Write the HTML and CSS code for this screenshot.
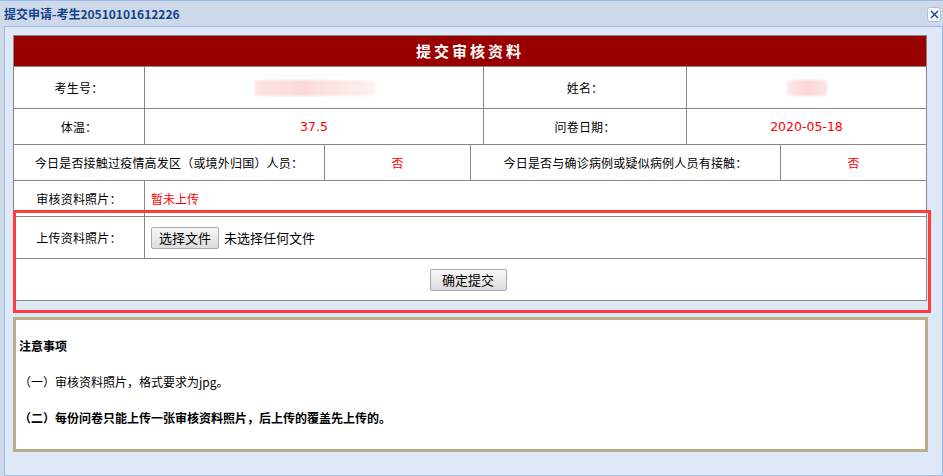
FILE: index.html
```html
<!DOCTYPE html>
<html lang="zh-CN">
  <head>
    <meta charset="utf-8">
    <title>提交申请</title>
    <link rel="stylesheet" href="styles.css">
  </head>

  <body>
    <div class="window">
      <div class="titlebar">
        <span class="title">提交申请-考生20510101612226</span>
        <button type="button" class="close" aria-label="关闭" title="关闭">
          <svg width="9" height="9" viewBox="0 0 9 9" fill="none" stroke="#15428b" stroke-width="1.4">
            <path d="M1 1 8 8M8 1 1 8" />
          </svg>
        </button>
      </div>

      <div class="panel">
        <!-- 제출 폼 -->
        <div class="form">
          <div class="head">提交审核资料</div>

          <div class="row tall">
            <div class="cell label c1">考生号：</div>
            <div class="cell c2"><span class="blur wide"></span></div>
            <div class="cell label c3">姓名：</div>
            <div class="cell c4"><span class="blur"></span></div>
          </div>

          <div class="row">
            <div class="cell label c1">体温：</div>
            <div class="cell c2 red num">37.5</div>
            <div class="cell label c3">问卷日期：</div>
            <div class="cell c4 red num">2020-05-18</div>
          </div>

          <div class="row">
            <div class="cell label d1">今日是否接触过疫情高发区（或境外归国）人员：</div>
            <div class="cell d2 red">否</div>
            <div class="cell label d3">今日是否与确诊病例或疑似病例人员有接触：</div>
            <div class="cell d4 red">否</div>
          </div>

          <div class="row">
            <div class="cell label c1">审核资料照片：</div>
            <div class="cell rest red left">暂未上传</div>
          </div>

          <div class="row tall">
            <div class="cell label c1">上传资料照片：</div>
            <div class="cell rest left">
              <span class="btn file-btn">选择文件</span>
              <span class="file-name">未选择任何文件</span>
            </div>
          </div>

          <div class="row tall">
            <div class="cell full">
              <button type="button" class="btn submit">确定提交</button>
            </div>
          </div>
        </div>

        <!-- 주의사항 -->
        <div class="notes">
          <p class="strong">注意事项</p>
          <p>（一）审核资料照片，格式要求为jpg。</p>
          <p class="strong">（二）每份问卷只能上传一张审核资料照片，后上传的覆盖先上传的。</p>
        </div>
      </div>

      <div class="mark"></div>
    </div>
  </body>
</html>
```

FILE: styles.css
```css
* {
  box-sizing: border-box;
}

html,
body {
  margin: 0;
  height: 100%;
  overflow: hidden;
}

body {
  font-family: "Noto Sans CJK SC", "DejaVu Sans", sans-serif;
  font-size: 12px;
  color: #000;
  background-color: #cdd9e8;
}

.window {
  position: relative;
  height: 100%;
  border-top: 1px solid #99bbe8;
}

.titlebar {
  display: flex;
  justify-content: space-between;
  align-items: center;
  height: 25px;
  padding-inline: 4px 2px;
  background-color: #cdd9e8;
}

.title {
  font-weight: bold;
  font-size: 12px;
  color: #15428b;
}

.close {
  display: flex;
  align-items: center;
  justify-content: center;
  width: 14px;
  height: 15px;
  margin-top: 1px;
  padding: 0;
  border: 1px solid #a9c3e6;
  border-radius: 3px;
  background-color: #f4f8fd;
}

.panel {
  margin-left: 4px;
  width: 939px;
  height: calc(100% - 25px);
  padding: 8px 0 0 8px;
  border: 1px solid #99bbe8;
  background-color: #dfe8f6;
}

.form {
  width: 914px;
  border: 1px solid #888;
  border-bottom: 0;
  background-color: #fff;
}

.head {
  height: 31px;
  border-bottom: 1px solid #888;
  background-color: #990000;
  color: #fff;
  font-weight: bold;
  font-size: 15px;
  letter-spacing: 3px;
  text-align: center;
  line-height: 30px;
}

.row {
  display: flex;
  height: 36px;
  border-bottom: 1px solid #888;
}

.row.tall {
  height: 42px;
}

.cell {
  display: flex;
  align-items: center;
  justify-content: center;
  border-right: 1px solid #888;

  &:last-child {
    border-right: 0;
  }
}

.label {
  letter-spacing: 0.2px;
}

.c1 { width: 131px; }
.c2 { width: 339px; }
.c3 { width: 203px; }
.c4 { width: 239px; }

.d1 { width: 311px; }
.d2 { width: 146px; }
.d3 { width: 310px; }
.d4 { width: 145px; }

.rest { width: 781px; }
.full { width: 912px; }

.left {
  justify-content: flex-start;
  padding-left: 6px;
}

.red {
  color: #f00;
}

.num {
  font-family: "DejaVu Sans", sans-serif;
  font-size: 12.5px;
}

.blur {
  display: block;
  width: 40px;
  height: 16px;
  background: linear-gradient(90deg, #fdeaea, #fbd0d0 50%, #fde4e4);
  filter: blur(1px);
  opacity: 0.9;

  &.wide {
    width: 120px;
    margin-left: 2px;
    background: linear-gradient(90deg, #fde0e0, #fcd6d6 40%, #fde8e8 80%, #fff0f0);
  }
}

.btn {
  display: inline-flex;
  align-items: center;
  justify-content: center;
  height: 22px;
  padding: 0;
  border: 1px solid #a8a8a8;
  border-radius: 2px;
  background: linear-gradient(#f8f8f8, #dcdcdc);
  font: inherit;
  font-size: 13px;
  color: #000;
}

.file-btn {
  width: 68px;
}

.file-name {
  margin-left: 5px;
  font-size: 13px;
}

.submit {
  width: 77px;
  margin-right: 4px;
}

.notes {
  width: 915px;
  height: 135px;
  margin-top: 16px;
  padding: 8px 3px 0;
  border: 3px solid #bcae8a;
  background-color: #fff;

  p {
    margin: 0;
    line-height: 36px;
  }

  .strong {
    font-weight: bold;
  }
}

.mark {
  position: absolute;
  left: 13px;
  top: 209px;
  width: 918px;
  height: 103px;
  border: 3px solid #ff3b3b;
  pointer-events: none;
}
```
